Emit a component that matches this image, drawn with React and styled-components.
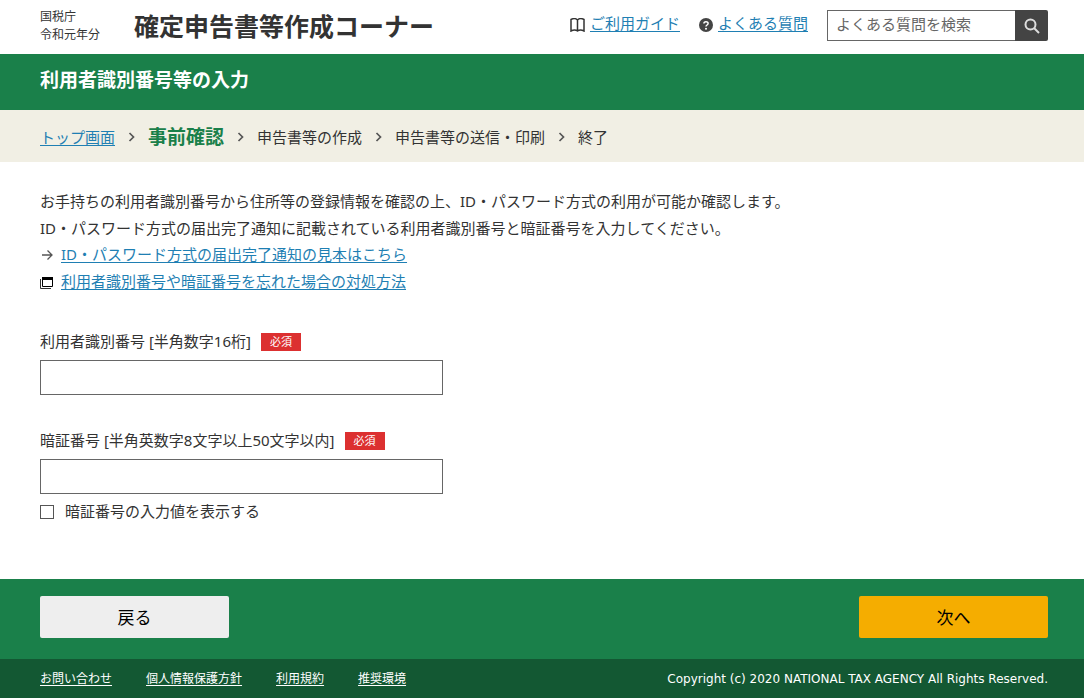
import React, { useState } from 'react';
import styled, { createGlobalStyle } from 'styled-components';

const GlobalStyle = createGlobalStyle`
  *, *::before, *::after {
    box-sizing: border-box;
  }

  body {
    margin: 0;
    background: #fff;
    color: #333;
    font-family: "Noto Sans", "Noto Sans CJK JP", sans-serif;
    font-size: 15px;
    line-height: 27px;
  }

  button, input {
    font-family: inherit;
  }
`;

const Link = styled.a`
  color: #1f7fb3;
  text-decoration: underline;
  text-underline-offset: 2px;
`;

const Header = styled.header`
  display: flex;
  align-items: center;
  padding: 10px 36px 13px 40px;
`;

const Agency = styled.p`
  margin: -2px 0 -3px;
  width: 94px;
  font-size: 12px;
  line-height: 18px;
`;

const SiteTitle = styled.div`
  padding-top: 2px;
  font-size: 25px;
  font-weight: bold;
  line-height: 29px;
  white-space: nowrap;
`;

const HeaderMenu = styled.div`
  display: flex;
  align-items: center;
  gap: 19px;
  margin-left: auto;
`;

const HelpItem = styled.span`
  display: flex;
  align-items: center;
  gap: 5px;
  padding-bottom: 4px;
  white-space: nowrap;

  svg {
    margin-top: 3px;
  }
`;

const SearchForm = styled.form`
  display: flex;
`;

const SearchInput = styled.input`
  width: 188px;
  height: 31px;
  padding: 0 8px 4px;
  border: 1px solid #666;
  border-right: 0;
  border-radius: 0;
  font-size: 15px;

  &::placeholder {
    color: #666;
  }
`;

const SearchButton = styled.button`
  display: flex;
  align-items: center;
  justify-content: center;
  width: 33px;
  height: 31px;
  padding: 0;
  border: 0;
  border-radius: 0 2px 2px 0;
  background: #444;
  cursor: pointer;
`;

const TitleBar = styled.div`
  padding: 12px 40px 16px;
  background: #1a804a;
`;

const PageTitle = styled.h1`
  margin: 0;
  color: #fff;
  font-size: 19px;
  line-height: 28px;
`;

const Breadcrumb = styled.ol`
  display: flex;
  align-items: center;
  gap: 13px;
  margin: 0;
  padding: 13px 40px 11px;
  background: #f1efe4;
  line-height: 28px;
  list-style: none;
`;

const Crumb = styled.li`
  display: flex;
  align-items: center;
  color: ${props => props.$current ? '#1a804a' : '#333'};
  font-size: ${props => props.$current ? '19px' : '15px'};
  font-weight: ${props => props.$current ? 'bold' : 'normal'};
`;

const Main = styled.main`
  padding: 26px 40px 54px;
`;

const Lead = styled.p`
  margin: 0;
`;

const LinkList = styled.ul`
  margin: -1px 0 0;
  padding: 0;
  list-style: none;
`;

const LinkItem = styled.li`
  display: flex;
  align-items: center;
  gap: 7px;
`;

const Field = styled.div`
  margin-top: 32px;

  ${LinkList} + & {
    margin-top: 33px;
  }
`;

const FieldHead = styled.div`
  display: flex;
  align-items: center;
  gap: 10px;
  margin-bottom: 5px;
`;

const Required = styled.span`
  padding: 0 9px;
  background: #dc3030;
  color: #fff;
  font-size: 11px;
  line-height: 18px;
`;

const TextInput = styled.input`
  display: block;
  width: 403px;
  max-width: 100%;
  height: 35px;
  padding: 0 8px;
  border: 1px solid #666;
  border-radius: 0;
  font-size: 15px;
`;

const CheckLabel = styled.label`
  display: flex;
  align-items: center;
  gap: 11px;
  width: fit-content;
  margin-top: 4px;
`;

const Checkbox = styled.input`
  appearance: none;
  width: 14px;
  height: 14px;
  margin: 0;
  border: 1px solid #555;
  background: #fff;

  &:checked {
    background: #1a804a;
  }
`;

const Actions = styled.div`
  display: flex;
  justify-content: space-between;
  padding: 17px 36px 21px 40px;
  background: #1a804a;
`;

const ActionButton = styled.button`
  width: 189px;
  height: 42px;
  padding: 0 0 2px;
  border: 0;
  border-radius: 2px;
  background: ${props => props.$primary ? '#f5ad00' : '#eee'};
  color: #000;
  font-size: 17px;
  cursor: pointer;
`;

const Footer = styled.footer`
  display: flex;
  justify-content: space-between;
  padding: 10px 36px 9px 40px;
  background: #135833;
  color: #fff;
  font-size: 12px;
  line-height: 20px;
`;

const FooterNav = styled.nav`
  display: flex;
  gap: 34px;
`;

const FooterLink = styled.a`
  color: #fff;
  text-underline-offset: 2px;
`;

const Copyright = styled.small`
  font-family: "DejaVu Sans", Verdana, sans-serif;
  font-size: 12px;
`;

const BookIcon = () => (
  <svg width="15" height="14" viewBox="0 0 15 14" fill="none" stroke="#333" strokeWidth="1.5" aria-hidden="true">
    <path d="M7.5 2C6 .5 3 .5 1 1.500V13c2-1 5-1 6.500 0C9 12 12 12 14 13V1.500C12 .5 9 .5 7.500 2V13" />
  </svg>
);

const QuestionIcon = () => (
  <svg width="14" height="14" viewBox="0 0 14 14" fill="none" aria-hidden="true">
    <circle cx="7" cy="7" r="7" fill="#444" />
    <path d="M4.900 5.600C4.900 3 9.100 3 9.100 5.500C9.100 7 7 7 7 8.600" stroke="#fff" strokeWidth="1.500" />
    <circle cx="7" cy="10.700" r="1" fill="#fff" />
  </svg>
);

const SearchIcon = () => (
  <svg width="16" height="16" viewBox="0 0 16 16" fill="none" stroke="#ddd" strokeWidth="2" aria-hidden="true">
    <circle cx="6.500" cy="6.500" r="5" />
    <path d="M10 10l5 5" />
  </svg>
);

const Chevron = () => (
  <svg width="7" height="10" viewBox="0 0 7 10" fill="none" stroke="#555" strokeWidth="1.700" aria-hidden="true">
    <path d="M1.500 1l4 4-4 4" />
  </svg>
);

const ArrowIcon = () => (
  <svg width="14" height="14" viewBox="0 0 14 14" fill="none" stroke="#555" strokeWidth="1.300" aria-hidden="true">
    <path d="M2 7h9.500M7.500 2.500L12 7l-4.500 4.500" />
  </svg>
);

const WindowIcon = () => (
  <svg width="14" height="14" viewBox="0 0 14 14" fill="none" aria-hidden="true">
    <path d="M.5 4v9.500H11" stroke="#333" />
    <path d="M2.500 3.500h10v8h-10z" stroke="#000" />
    <path d="M2 2h11v3H2z" fill="#000" />
  </svg>
);

const steps = [
  { label: 'トップ画面', href: '#top' },
  { label: '事前確認', current: true },
  { label: '申告書等の作成' },
  { label: '申告書等の送信・印刷' },
  { label: '終了' },
];

const footerLinks = ['お問い合わせ', '個人情報保護方針', '利用規約', '推奨環境'];

export default function App() {
  const [showPin, setShowPin] = useState(false);

  return (
    <>
      <GlobalStyle />
      <Header>
        <Agency>国税庁<br />令和元年分</Agency>
        <SiteTitle>確定申告書等作成コーナー</SiteTitle>
        <HeaderMenu>
          <HelpItem><BookIcon /><Link href="#guide">ご利用ガイド</Link></HelpItem>
          <HelpItem><QuestionIcon /><Link href="#faq">よくある質問</Link></HelpItem>
          <SearchForm onSubmit={e => e.preventDefault()}>
            <SearchInput type="text" placeholder="よくある質問を検索" aria-label="よくある質問を検索" />
            <SearchButton type="submit" aria-label="検索"><SearchIcon /></SearchButton>
          </SearchForm>
        </HeaderMenu>
      </Header>
      <TitleBar>
        <PageTitle>利用者識別番号等の入力</PageTitle>
      </TitleBar>
      <Breadcrumb>
        {steps.map((step, i) => (
          <React.Fragment key={step.label}>
            {i > 0 && <Crumb aria-hidden="true"><Chevron /></Crumb>}
            <Crumb $current={step.current}>
              {step.href ? <Link href={step.href}>{step.label}</Link> : step.label}
            </Crumb>
          </React.Fragment>
        ))}
      </Breadcrumb>
      <Main>
        <Lead>お手持ちの利用者識別番号から住所等の登録情報を確認の上、ID・パスワード方式の利用が可能か確認します。</Lead>
        <Lead>ID・パスワード方式の届出完了通知に記載されている利用者識別番号と暗証番号を入力してください。</Lead>
        <LinkList>
          <LinkItem><ArrowIcon /><Link href="#sample">ID・パスワード方式の届出完了通知の見本はこちら</Link></LinkItem>
          <LinkItem><WindowIcon /><Link href="#forgot">利用者識別番号や暗証番号を忘れた場合の対処方法</Link></LinkItem>
        </LinkList>
        <Field>
          <FieldHead>
            <label htmlFor="user-id">利用者識別番号 [半角数字16桁]</label>
            <Required>必須</Required>
          </FieldHead>
          <TextInput id="user-id" type="text" />
        </Field>
        <Field>
          <FieldHead>
            <label htmlFor="pin">暗証番号 [半角英数字8文字以上50文字以内]</label>
            <Required>必須</Required>
          </FieldHead>
          <TextInput id="pin" type={showPin ? 'text' : 'password'} />
          <CheckLabel>
            <Checkbox type="checkbox" checked={showPin} onChange={e => setShowPin(e.target.checked)} />
            暗証番号の入力値を表示する
          </CheckLabel>
        </Field>
      </Main>
      <Actions>
        <ActionButton type="button">戻る</ActionButton>
        <ActionButton type="button" $primary>次へ</ActionButton>
      </Actions>
      <Footer>
        <FooterNav>
          {footerLinks.map(label => <FooterLink key={label} href="#footer">{label}</FooterLink>)}
        </FooterNav>
        <Copyright>Copyright (c) 2020 NATIONAL TAX AGENCY All Rights Reserved.</Copyright>
      </Footer>
    </>
  );
}
